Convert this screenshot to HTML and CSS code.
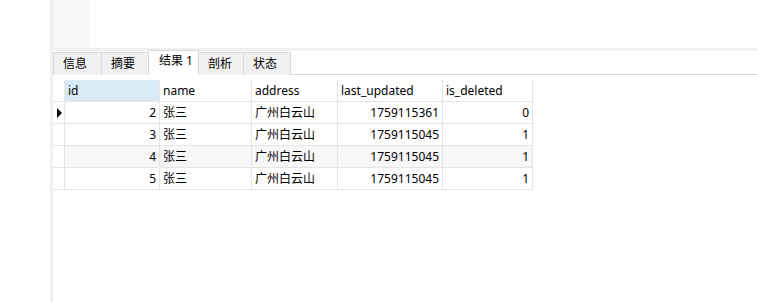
FILE: index.html
```html
<!DOCTYPE html>
<html>
<head>
<meta charset="utf-8">
<link rel="stylesheet" href="styles.css">
</head>
<body>
<div class="app">
  <div class="sidebar"></div>
  <div class="divider"></div>
  <div class="main">
    <div class="top">
      <div class="top-panel"></div>
    </div>
    <div class="hsplit"></div>
    <div class="tabbar">
      <div class="tab">信息</div>
      <div class="tab">摘要</div>
      <div class="tab active">结果 1</div>
      <div class="tab">剖析</div>
      <div class="tab">状态</div>
    </div>
    <div class="content">
      <div class="grid">
        <div class="row head">
          <div class="cell ind"></div>
          <div class="cell c-id sel">id</div>
          <div class="cell c-name">name</div>
          <div class="cell c-addr">address</div>
          <div class="cell c-upd">last_updated</div>
          <div class="cell c-del">is_deleted</div>
        </div>
        <div class="row">
          <div class="cell ind cur"><span class="arrow"></span></div>
          <div class="cell c-id num">2</div>
          <div class="cell c-name">张三</div>
          <div class="cell c-addr">广州白云山</div>
          <div class="cell c-upd num">1759115361</div>
          <div class="cell c-del num">0</div>
        </div>
        <div class="row">
          <div class="cell ind"></div>
          <div class="cell c-id num">3</div>
          <div class="cell c-name">张三</div>
          <div class="cell c-addr">广州白云山</div>
          <div class="cell c-upd num">1759115045</div>
          <div class="cell c-del num">1</div>
        </div>
        <div class="row alt">
          <div class="cell ind"></div>
          <div class="cell c-id num">4</div>
          <div class="cell c-name">张三</div>
          <div class="cell c-addr">广州白云山</div>
          <div class="cell c-upd num">1759115045</div>
          <div class="cell c-del num">1</div>
        </div>
        <div class="row">
          <div class="cell ind"></div>
          <div class="cell c-id num">5</div>
          <div class="cell c-name">张三</div>
          <div class="cell c-addr">广州白云山</div>
          <div class="cell c-upd num">1759115045</div>
          <div class="cell c-del num">1</div>
        </div>
      </div>
    </div>
  </div>
</div>
</body>
</html>
```
FILE: styles.css
```css
* { box-sizing: border-box; }
html, body { margin: 0; padding: 0; background: #fff; }
body {
  font-family: "Noto Sans", "Noto Sans CJK SC", sans-serif;
  font-size: 12px;
  color: #000;
  width: 757px;
  height: 302px;
  overflow: hidden;
}
.app { display: flex; height: 302px; }
.sidebar { width: 50px; background: #fff; flex: none; }
.divider { width: 3px; background: #f0f0f0; flex: none; }
.main { flex: 1; display: flex; flex-direction: column; }
.top { height: 48px; display: flex; background: #fff; }
.top-panel { width: 36px; background: #f7f7f7; }
.hsplit { height: 3px; background: #f0f0f0; }
.tabbar {
  height: 24px;
  display: flex;
  align-items: flex-end;
  border-bottom: 1px solid #d9d9d9;
  padding-left: 0;
}
.tab {
  height: 23px;
  margin-bottom: -1px;
  background: #f0f0f0;
  border: 1px solid #d9d9d9;
  border-bottom: none;
  margin-right: -1px;
  padding: 3px 0 0 9px;
  line-height: 16px;
  flex: none;
}
.tab:nth-child(1) { width: 49px; }
.tab:nth-child(2) { width: 48px; }
.tab:nth-child(3) { width: 51px; }
.tab:nth-child(4) { width: 46px; }
.tab:nth-child(5) { width: 48px; }
.tab.active {
  background: #fff;
  height: 25px;
  padding-top: 2px;
  position: relative;
  z-index: 1;
  padding-left: 10px;
}
.content { flex: 1; padding-top: 5px; }
.grid { display: flex; flex-direction: column; }
.row { display: flex; height: 22px; }
.row.alt .cell:not(.ind) { background: #f7f7f7; }
.cell {
  flex: none;
  height: 22px;
  border-right: 1px solid #e5e5e5;
  border-bottom: 1px solid #e5e5e5;
  padding: 0 3px;
  line-height: 21px;
  white-space: nowrap;
  overflow: hidden;
}
.num { text-align: right; }
.ind { width: 12px; padding: 0; display: flex; align-items: center; justify-content: center; }
.head .ind { border-bottom-color: #e5e5e5; }
.c-id { width: 95px; }
.c-name { width: 92px; }
.c-addr { width: 86px; }
.c-upd { width: 105px; }
.c-del { width: 90px; }
.sel { background: #d9eaf7; }
.arrow {
  width: 0; height: 0;
  border-top: 5px solid transparent;
  border-bottom: 5px solid transparent;
  border-left: 5px solid #000;
  margin-left: 1px;
}
```
